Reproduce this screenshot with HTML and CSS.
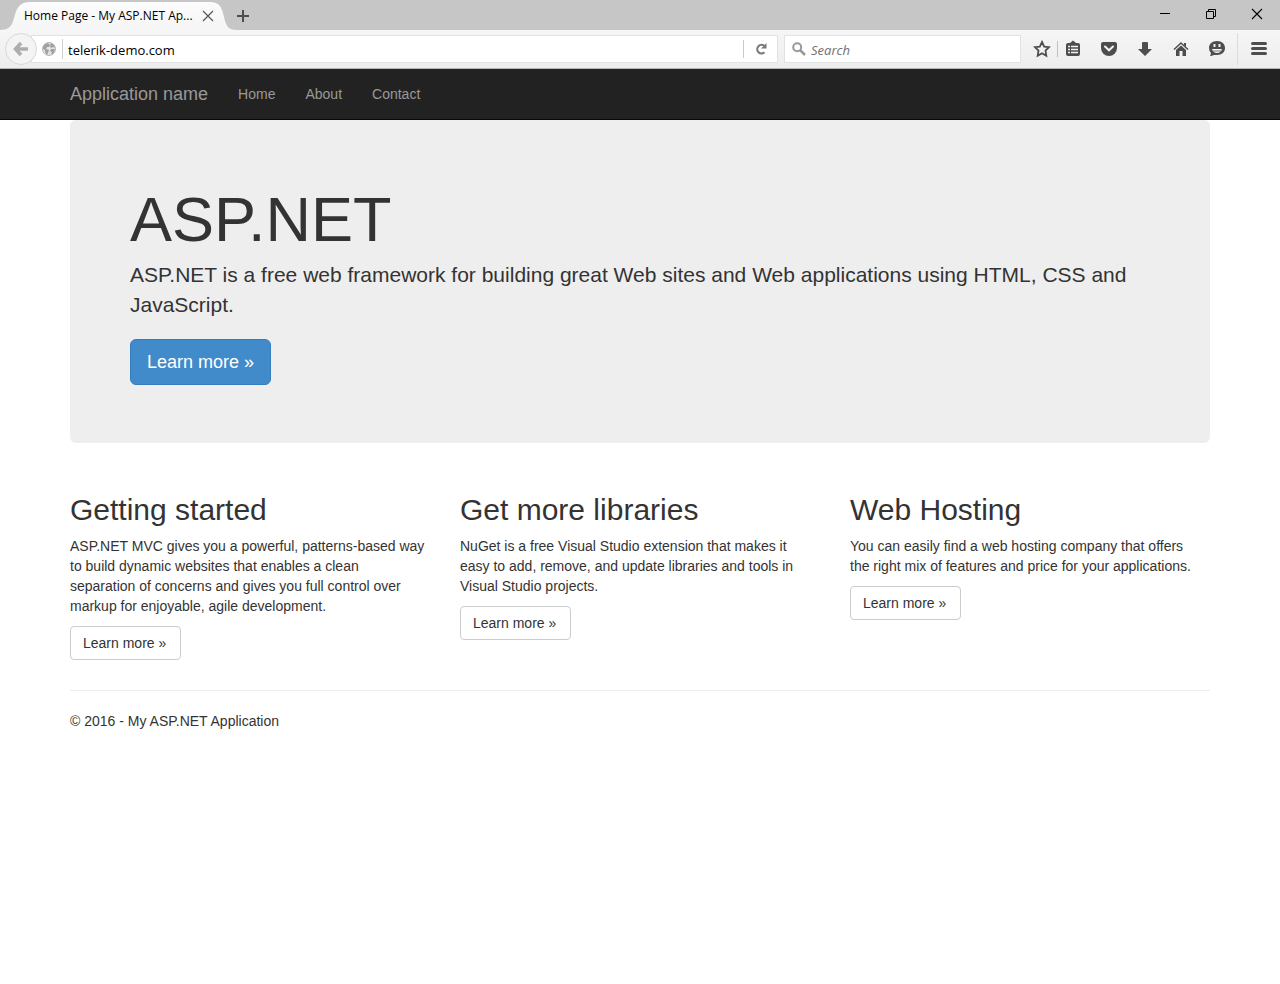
FILE: index.html
```html
<!DOCTYPE html>
<html lang="en">
<head>
<meta charset="utf-8">
<meta name="viewport" content="width=device-width, initial-scale=1">
<title>Home Page - My ASP.NET Application</title>
<link rel="stylesheet" href="styles.css">
</head>
<body>
<div class="browser">
  <div class="titlebar">
    <div class="tab">
      <svg class="tab-shape" width="232" height="30" viewBox="0 0 232 30" aria-hidden="true"><defs><linearGradient id="tabfill" x1="0" y1="0" x2="0" y2="1"><stop offset="0" stop-color="#fcfcfc"/><stop offset="1" stop-color="#f5f5f5"/></linearGradient></defs><path fill="url(#tabfill)" d="M0 30C9 30 12 26 14 18C17 7 20 2 30 2H210C219 2 222 7 224 17C226 26 228 30 237 30Z"/></svg>
      <span class="tab-title">Home Page - My ASP.NET Ap...</span>
      <button class="plain" aria-label="Close tab"><svg width="12" height="12" viewBox="0 0 12 12"><path d="M1 1L11 11M11 1L1 11" stroke="#555" stroke-width="1.2"/></svg></button>
    </div>
    <button class="plain new-tab" aria-label="New tab"><svg width="14" height="14" viewBox="0 0 14 14"><path d="M7 1V13M1 7H13" stroke="#4d4d4d" stroke-width="2"/></svg></button>
    <div class="window-controls">
      <button class="plain" aria-label="Minimize"><svg width="12" height="12" viewBox="0 0 12 12"><path d="M1 5.500H11" stroke="#000"/></svg></button>
      <button class="plain" aria-label="Restore"><svg width="12" height="12" viewBox="0 0 12 12"><path d="M1.500 3.500H8.500V10.500H1.500ZM3.500 3.500V1.500H10.500V8.500H8.500" fill="none" stroke="#000"/></svg></button>
      <button class="plain" aria-label="Close window"><svg width="12" height="12" viewBox="0 0 12 12"><path d="M1 1L11 11M11 1L1 11" stroke="#000" stroke-width="1.100"/></svg></button>
    </div>
  </div>
  <div class="toolbar">
    <button class="back" aria-label="Back"><svg width="16" height="16" viewBox="0 0 16 16"><path d="M8 2L2.500 8L8 14M3 8H15" fill="none" stroke="#adadad" stroke-width="3.500"/></svg></button>
    <div class="address">
      <svg class="globe" width="14" height="14" viewBox="0 0 14 14" aria-hidden="true"><circle cx="7" cy="7" r="6.500" fill="#e4e4e4" stroke="#b8b8b8"/><path fill="#a0a0a0" d="M1 5L3 2L6 1L8 3L7 5L5 5L4 7L7 8L6 11L5 13L3 10L3 8L1 7ZM9 1L12 3L13 6L11 5L9 6L8 4ZM9 7L12 7L13 8L11 12L9 12L10 10L8 9Z"/></svg>
      <input class="url" type="text" value="telerik-demo.com" aria-label="Address">
      <button class="plain reload" aria-label="Reload"><svg width="12" height="12" viewBox="0 0 12 12"><path d="M9.500 3A4.300 4.300 0 1 0 9.500 9.300" fill="none" stroke="#7b7b7b" stroke-width="2.200"/><path d="M11.500 0V5.500H6Z" fill="#7b7b7b"/></svg></button>
    </div>
    <div class="search">
      <svg width="14" height="14" viewBox="0 0 14 14" aria-hidden="true"><circle cx="5.200" cy="5.200" r="4" fill="none" stroke="#989898" stroke-width="2"/><path d="M8 8L13 13" stroke="#989898" stroke-width="2.500"/></svg>
      <input type="text" placeholder="Search" aria-label="Search">
    </div>
    <div class="tools">
      <button class="plain star" aria-label="Bookmark"><svg width="18" height="18" viewBox="0 0 18 18"><path d="M9 2L11.200 6.600L16 7.200L12.500 10.600L13.300 15.700L9 13.200L4.700 15.700L5.500 10.600L2 7.200L6.800 6.600Z" fill="none" stroke="#4d4d4d" stroke-width="1.800"/></svg></button>
      <button class="plain list" aria-label="Bookmarks list"><svg width="18" height="18" viewBox="0 0 18 18"><path fill="#4d4d4d" d="M6 3L9 0.500L12 3H14Q16 3 16 5V14Q16 16 14 16H4Q2 16 2 14V5Q2 3 4 3Z"/><path stroke="#f2f2f2" stroke-width="1.500" d="M4 6.500H6M7 6.500H14M4 9.500H6M7 9.500H14M4 12.500H6M7 12.500H14"/></svg></button>
      <button class="plain" aria-label="Pocket"><svg width="18" height="18" viewBox="0 0 18 18"><path fill="#4d4d4d" d="M3 2H15Q17 2 17 4V8A8 8 0 0 1 1 8V4Q1 2 3 2Z"/><path d="M5 6.500L9 10.300L13 6.500" fill="none" stroke="#f2f2f2" stroke-width="2" stroke-linecap="round"/></svg></button>
      <button class="plain" aria-label="Downloads"><svg width="18" height="18" viewBox="0 0 18 18"><path fill="#4d4d4d" d="M6 3Q6 2 7 2H11Q12 2 12 3V9H16L9 16L2 9H6Z"/></svg></button>
      <button class="plain" aria-label="Home page"><svg width="18" height="18" viewBox="0 0 18 18"><path d="M2 9.500L9 3L16 9.500" fill="none" stroke="#4d4d4d" stroke-width="1.500"/><path fill="#4d4d4d" d="M12 3H14V7L12 5ZM4 10L9 5.500L14 10V16H10.500V11H7.500V16H4Z"/></svg></button>
      <button class="plain" aria-label="Chat"><svg width="18" height="18" viewBox="0 0 18 18"><path fill="#4d4d4d" d="M9 1C14 1 17 4 17 8C17 12 14 15 9 15H6Q4 16 2 16Q3 14 3 13Q1 11 1 8C1 4 4 1 9 1Z"/><path fill="#f2f2f2" d="M4 9H14Q13 13 9 13T4 9Z"/><path stroke="#f2f2f2" stroke-width="2" d="M6.500 4V7M11.500 4V7"/><path d="M5 11H13" stroke="#4d4d4d" stroke-width=".7"/></svg></button>
      <button class="plain menu" aria-label="Menu"><svg width="18" height="18" viewBox="0 0 18 18"><path d="M2.500 3.500H15.500M2.500 8.500H15.500M2.500 13.500H15.500" stroke="#4d4d4d" stroke-width="3" stroke-linecap="round"/></svg></button>
    </div>
  </div>
</div>
<nav class="navbar">
  <div class="container nav-row">
    <a class="brand" href="#">Application name</a>
    <a href="#">Home</a>
    <a href="#">About</a>
    <a href="#">Contact</a>
  </div>
</nav>
<main class="container">
  <section class="jumbotron">
    <h1>ASP.NET</h1>
    <p>ASP.NET is a free web framework for building great Web sites and Web applications using HTML, CSS and JavaScript.</p>
    <a class="btn btn-primary" href="#">Learn more »</a>
  </section>
  <div class="columns">
    <section>
      <h2>Getting started</h2>
      <p>ASP.NET MVC gives you a powerful, patterns-based way to build dynamic websites that enables a clean separation of concerns and gives you full control over markup for enjoyable, agile development.</p>
      <a class="btn" href="#">Learn more »</a>
    </section>
    <section>
      <h2>Get more libraries</h2>
      <p>NuGet is a free Visual Studio extension that makes it easy to add, remove, and update libraries and tools in Visual Studio projects.</p>
      <a class="btn" href="#">Learn more »</a>
    </section>
    <section>
      <h2>Web Hosting</h2>
      <p>You can easily find a web hosting company that offers the right mix of features and price for your applications.</p>
      <a class="btn" href="#">Learn more »</a>
    </section>
  </div>
  <footer><p>© 2016 - My ASP.NET Application</p></footer>
</main>
</body>
</html>
```
FILE: styles.css
```css
* { box-sizing: border-box; }
body {
  margin: 0;
  background: #fff;
  color: #333;
  font: 14px/20px "Liberation Sans", Arial, sans-serif;
}
h1, h2, p { margin: 0; font-weight: 400; }
a { text-decoration: none; }
svg { display: block; flex: none; }

.plain {
  display: flex;
  align-items: center;
  justify-content: center;
  padding: 0;
  border: 0;
  background: none;
}

/* Browser window */
.browser { font-family: "Open Sans", "Noto Sans", sans-serif; }
.titlebar { display: flex; height: 30px; background: #c6c6c6; }
.tab {
  position: relative;
  display: flex;
  align-items: center;
  justify-content: space-between;
  width: 232px;
  padding: 2px 18px 0 24px;
}
.tab-shape { position: absolute; left: 0; top: 0; overflow: visible; }
.tab-title, .tab .plain { position: relative; }
.tab-title { color: #000; font-size: 12px; white-space: nowrap; }
.new-tab { width: 22px; padding-top: 2px; }
.window-controls { display: flex; margin-left: auto; }
.window-controls .plain { width: 46px; height: 28px; }

.toolbar {
  display: flex;
  align-items: center;
  height: 39px;
  padding-left: 5px;
  border-bottom: 1px solid #b6b6b6;
  background: linear-gradient(#f6f6f6, #ededed);
}
.back {
  z-index: 1;
  display: flex;
  align-items: center;
  justify-content: center;
  flex: none;
  width: 32px;
  height: 32px;
  padding: 0;
  border: 1px solid #d8d8d8;
  border-radius: 50%;
  background: #f4f4f4;
}
.address, .search {
  display: flex;
  align-items: center;
  height: 28px;
  border: 1px solid #e2e2e2;
  background: #fff;
}
.address { flex: 1; min-width: 0; margin-left: -6px; padding-left: 10px; }
.search { flex: 0 1 237px; margin-left: 6px; padding-left: 7px; gap: 5px; }
.browser input {
  flex: 1;
  min-width: 0;
  padding: 2px 0 0;
  border: 0;
  outline: 0;
  background: none;
  color: #000;
  font: 13px/18px "Open Sans", "Noto Sans", sans-serif;
}
.browser .url { margin-left: 6px; padding-left: 5px; border-left: 1px solid #d0d0d0; }
.search input::placeholder { color: #707070; font-style: italic; opacity: 1; }
.reload { width: 34px; height: 18px; border-left: 1px solid #c8c8c8; }
.tools { display: flex; align-items: center; height: 38px; padding-left: 6px; }
.tools .plain { width: 36px; height: 32px; }
.tools .star { width: 31px; height: 16px; border-right: 1px solid #c0c0c0; }
.tools .list { width: 30px; margin-right: 3px; }
.tools .menu { width: 43px; margin-left: 2px; border-left: 1px solid #dcdcdc; }

/* Site */
.container {
  width: 100%;
  max-width: 1170px;
  margin: 0 auto;
  padding: 0 15px;
}
.navbar { background: #222; border-bottom: 1px solid #080808; }
.nav-row { display: flex; align-items: center; gap: 30px; min-height: 50px; }
.nav-row a { color: #999; }
.nav-row .brand { font-size: 18px; }

.jumbotron {
  padding: 68px 60px 58px;
  margin-bottom: 50px;
  border-radius: 6px;
  background: #eee;
}
.jumbotron h1 { margin-bottom: 9px; font-size: 63px; line-height: 63px; }
.jumbotron p { margin-bottom: 19px; font-size: 21px; line-height: 30px; }

.btn {
  display: inline-block;
  padding: 6px 14px 6px 12px;
  border: 1px solid #ccc;
  border-radius: 4px;
  background: #fff;
  color: #333;
  vertical-align: top;
}
.btn-primary {
  padding: 10px 16px;
  border-color: #357ebd;
  border-radius: 6px;
  background: #428bca;
  color: #fff;
  font-size: 18px;
  line-height: 24px;
}

.columns {
  display: grid;
  grid-template-columns: repeat(auto-fit, minmax(280px, 1fr));
  gap: 30px;
}
.columns h2 { margin-bottom: 10px; font-size: 30px; line-height: 33px; }
.columns p { margin-bottom: 10px; padding-right: 5px; }

footer { margin-top: 30px; padding-top: 20px; border-top: 1px solid #eee; }
```
